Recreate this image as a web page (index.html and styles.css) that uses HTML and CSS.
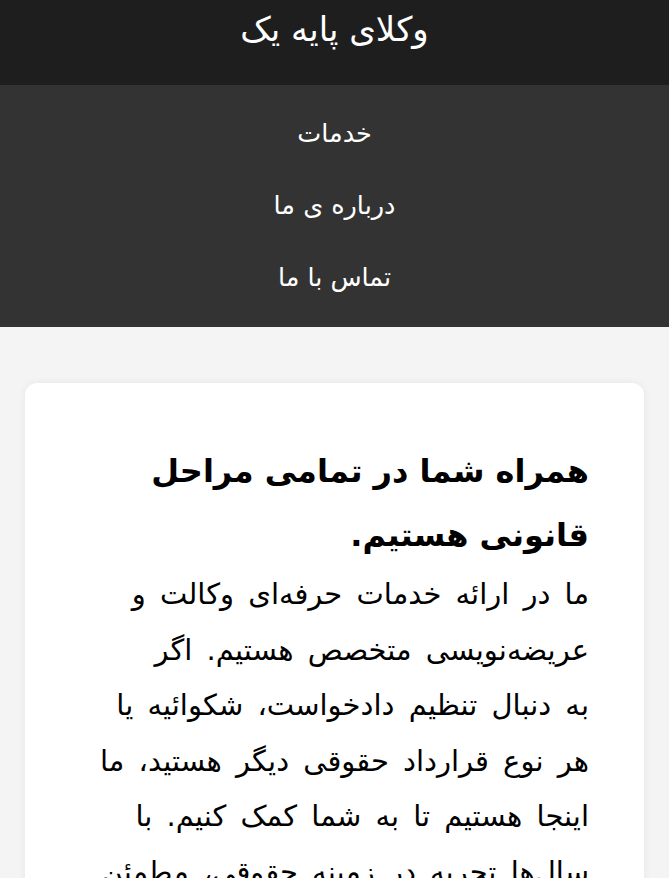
FILE: index.html
```html
<!DOCTYPE html>
<html lang="fa" dir="rtl">
<head>
<meta charset="utf-8">
<title>وکلای پایه یک</title>
<link rel="stylesheet" href="styles.css">
</head>
<body>
<header class="site-header">
  <h1 class="site-title">وکلای پایه یک</h1>
</header>
<nav class="site-nav">
  <a href="#services" class="nav-link">خدمات</a>
  <a href="#about" class="nav-link">درباره ی ما</a>
  <a href="#contact" class="nav-link">تماس با ما</a>
</nav>
<main class="content">
  <section class="card">
    <h2 class="card-title">همراه شما در تمامی مراحل قانونی هستیم.</h2>
    <p class="card-text">ما در ارائه خدمات حرفه‌ای وکالت و<br>
عریضه‌نویسی متخصص هستیم. اگر<br>
به دنبال تنظیم دادخواست، شکوائیه یا<br>
هر نوع قرارداد حقوقی دیگر هستید، ما<br>
اینجا هستیم تا به شما کمک کنیم. با<br>
سال‌ها تجربه در زمینه حقوقی، مطمئن<br>
باشید که کار شما در دستان متخصص انجام خواهد شد.</p>
  </section>
</main>
</body>
</html>
```
FILE: styles.css
```css
* { box-sizing: border-box; }
html, body { margin: 0; padding: 0; }
body {
  font-family: "DejaVu Sans", "Noto Sans", sans-serif;
  background: #f4f4f4;
  color: #000;
}
.site-header {
  background: #1e1e1e;
  color: #fff;
  height: 85px;
  text-align: center;
}
.site-title {
  margin: 0;
  padding-top: 7px;
  font-size: 34px;
  font-weight: normal;
  line-height: 44px;
}
.site-nav {
  background: #333333;
  display: flex;
  flex-direction: column;
  align-items: center;
  padding: 12px 0 14px;
}
.nav-link {
  color: #fff;
  text-decoration: none;
  font-size: 25.5px;
  line-height: 72px;
}
.content {
  padding: 56px 25px 0;
}
.card {
  background: #fff;
  border-radius: 12px;
  box-shadow: 0 0 8px rgba(0,0,0,0.06);
  padding: 56px 55px 40px;
}
.card-title {
  margin: 0;
  font-size: 32px;
  font-weight: bold;
  line-height: 64px;
}
.card-text {
  margin: 0;
  font-size: 29px;
  line-height: 55.5px;
  word-spacing: 5px;
}
```
